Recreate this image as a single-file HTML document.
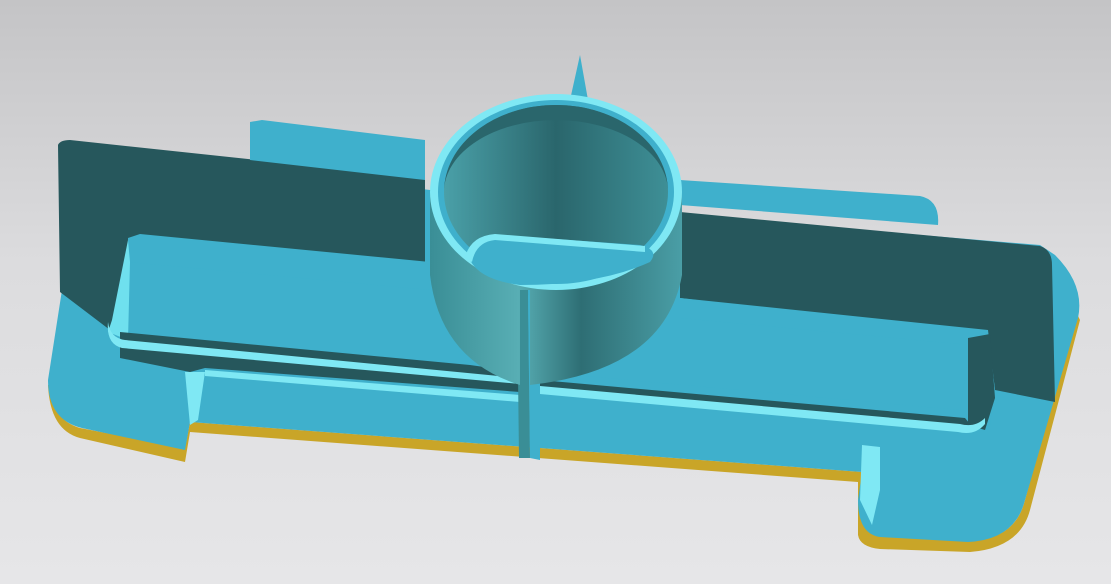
<!DOCTYPE html>
<html><head><meta charset="utf-8"><style>
html,body{margin:0;padding:0;width:1111px;height:584px;overflow:hidden}
body{background:linear-gradient(#c4c4c6 0%,#dcdcde 45%,#e6e6e8 100%)}
svg{display:block}
</style></head><body>
<svg width="1111" height="584" viewBox="0 0 1111 584">
<defs>
<linearGradient id="cyl" x1="0" x2="1">
<stop offset="0" stop-color="#3a8e96"/><stop offset="0.35" stop-color="#58aeb4"/>
<stop offset="0.6" stop-color="#2e6e74"/><stop offset="1" stop-color="#4a9ea6"/></linearGradient>
<linearGradient id="cylin" x1="0" x2="1">
<stop offset="0" stop-color="#4aa0a8"/><stop offset="0.5" stop-color="#2a666c"/>
<stop offset="1" stop-color="#3e8f96"/></linearGradient>
</defs>
<path d="M48,385 Q50,430 80,438 L185,462 L190,432 L858,482 L858,535 Q860,547 880,549 L970,552 Q1020,548 1030,510 L1080,320 L1076,312 L1025,500 Q1015,540 970,540 L880,535 L862,472 L190,422 L185,448 L80,428 Q52,420 50,385 Z" fill="#c9a528"/>
<path d="M62,290 L48,380 Q48,420 82,428 L185,450 L190,422 L862,472 L858,500 Q858,534 880,537 L968,542 Q1015,540 1025,500 L1078,318 Q1085,285 1055,255 L1040,245 L680,215 L430,190 L62,145 Z" fill="#3fb0cc"/>
<path d="M58,145 Q60,140 70,140 L425,178 L425,268 L132,238 L110,330 L60,292 Z" fill="#26575c"/>
<path d="M250,122 L262,120 L425,140 L425,180 L250,160 Z" fill="#3fb0cc"/>
<path d="M680,212 L1040,246 Q1052,250 1052,265 L1055,402 L995,390 L988,335 L680,298 Z" fill="#26575c"/>
<path d="M680,180 L920,196 Q940,200 938,225 L680,205 Z" fill="#3fb0cc"/>
<path d="M128,238 L140,234 L430,262 L430,290 L128,262 Z" fill="#3fb0cc"/>
<path d="M128,240 L112,320 L108,332 L128,340 L130,262 Z" fill="#6fe0ee"/>
<path d="M120,332 L470,365 L520,372 L520,392 L205,368 L190,372 L120,358 Z" fill="#26575c"/>
<path d="M108,322 Q110,338 125,340 L520,378 L520,384 L122,348 Q106,344 108,322 Z" fill="#7fe8f4"/>
<path d="M205,370 L520,395 L520,402 L205,376 Z" fill="#7fe8f4"/>
<path d="M680,298 L988,330 L995,390 L990,425 L970,430 L540,390 L540,372 L960,410 L970,345 L680,318 Z" fill="#3fb0cc"/>
<path d="M540,380 L965,418 L975,430 L540,392 Z" fill="#26575c"/>
<path d="M968,338 L990,334 L995,398 L985,430 L968,425 Z" fill="#26575c"/>
<path d="M540,386 L960,424 Q975,428 985,418 L985,424 Q975,436 958,432 L540,394 Z" fill="#7fe8f4"/>
<path d="M862,445 L880,447 L880,490 L872,525 L860,500 Z" fill="#7fe8f4"/>
<path d="M185,372 L205,372 L198,420 L190,425 Z" fill="#7fe8f4"/>
<path d="M517,290 L528,290 L530,458 L519,458 Z" fill="#3a8e96"/>
<path d="M528,295 L540,300 L540,460 L530,458 Z" fill="#3fb0cc"/>
<path d="M570,100 L580,55 L588,100 L600,108 L570,108 Z" fill="#3fb0cc"/>
<path d="M430,190 L430,275 Q440,360 520,385 L520,290 L530,290 L530,385 Q665,370 682,275 L682,190 Z" fill="url(#cyl)"/>
<ellipse cx="556" cy="192" rx="126" ry="98" fill="#7fe8f4"/>
<ellipse cx="556" cy="192" rx="118" ry="92" fill="#3fb0cc"/>
<ellipse cx="556" cy="192" rx="112" ry="87" fill="url(#cylin)"/>
<path d="M470,260 Q480,232 500,235 L640,245 Q660,250 650,262 Q600,285 520,285 Q480,280 470,260 Z" fill="#3fb0cc"/>
<path d="M465,258 Q470,236 495,234 L645,246 L645,252 L495,240 Q476,242 472,262 Z" fill="#7fe8f4"/>
<path d="M444,192 A112 87 0 0 1 668,192 A112 72 0 0 0 444,192 Z" fill="#2a666c"/>
</svg>
</body></html>
